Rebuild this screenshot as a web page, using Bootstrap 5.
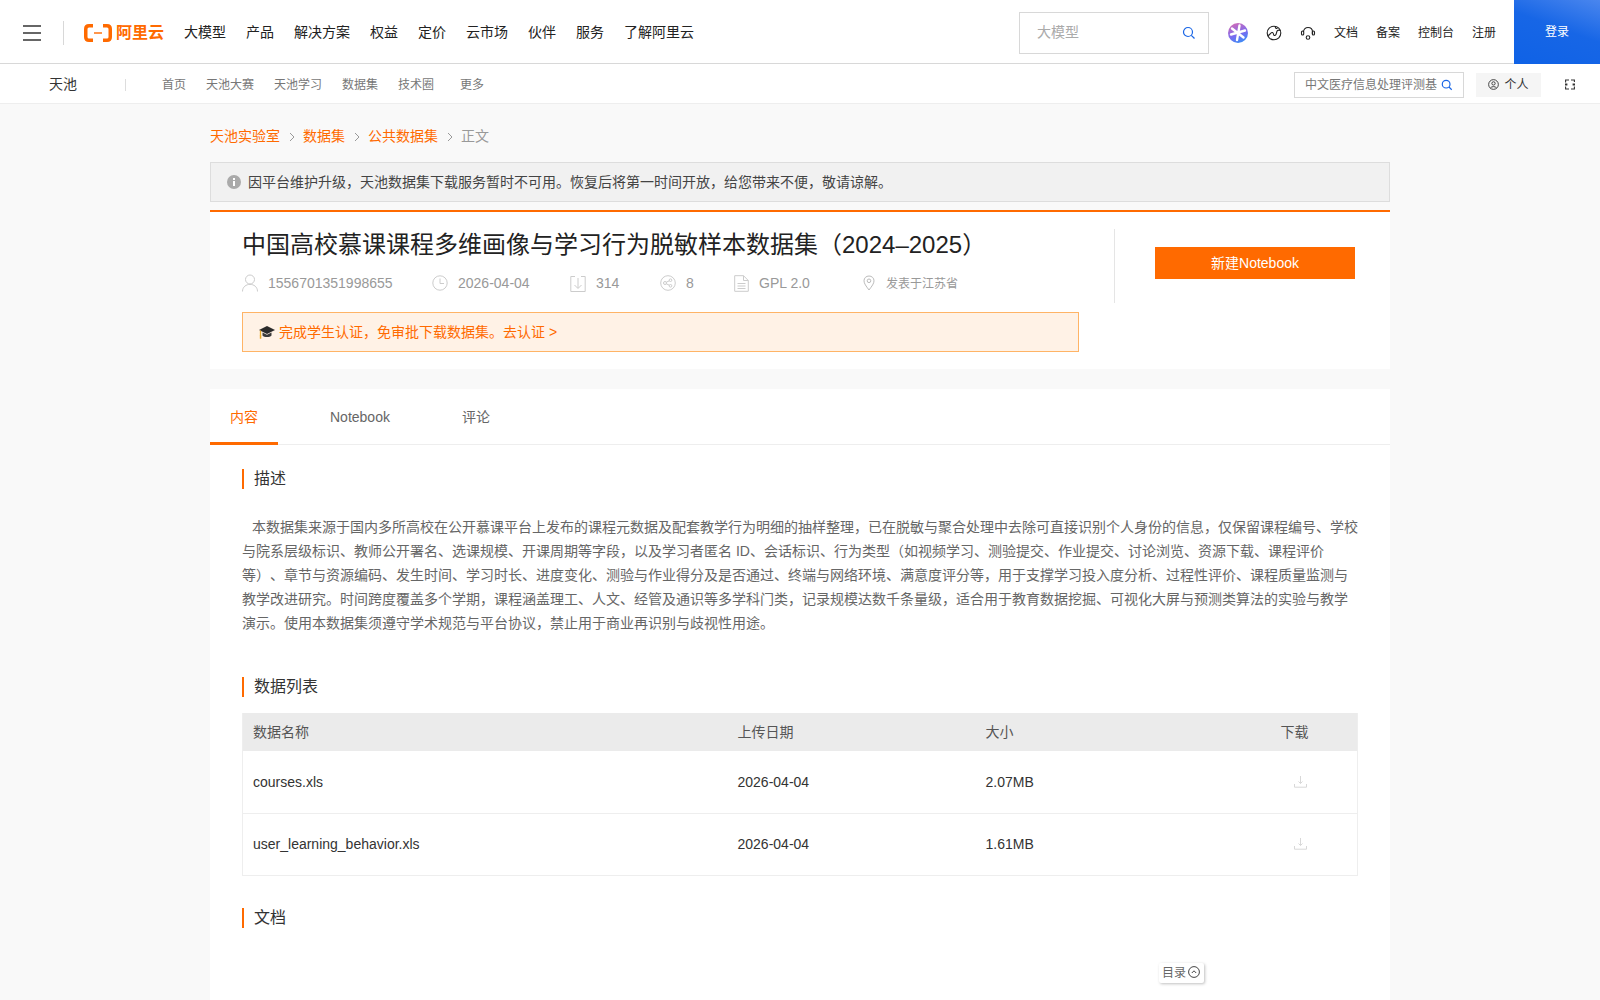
<!DOCTYPE html>
<html lang="zh-CN">
<head>
    <meta charset="UTF-8">
    <title>天池数据集</title>
    <link href="https://cdn.jsdelivr.net/npm/bootstrap@5.3.0/dist/css/bootstrap.min.css" rel="stylesheet">
    <style>
        body {
            background: #f9f9f9;
            font-family: "Liberation Sans", "Noto Sans CJK SC", sans-serif;
            font-size: 14px;
            color: #333;
            text-spacing-trim: space-all;
        }
        a { text-decoration: none; color: inherit; }

        /* top bar */
        .top-bar { height: 64px; background: #fff; border-bottom: 1px solid #d8d8d8; padding-top: 2px; }
        .menu-btn { width: 18px; margin-left: 23px; }
        .menu-btn span { display: block; height: 2px; background: #666; margin-bottom: 5px; }
        .menu-btn span:last-child { margin-bottom: 0; }
        .top-sep { width: 1px; height: 24px; background: #d8d8d8; margin: 0 20px 0 22px; }
        .logo-text { color: #ff6a00; font-size: 16px; font-weight: 700; line-height: 1; margin-left: 4px; }
        .top-nav { gap: 20px; margin-left: 20px; color: #222; }
        .top-search { width: 190px; height: 42px; border: 1px solid #d8d8d8; padding: 0 12px 0 17px; color: #aaa; }
        .top-right { gap: 18px; font-size: 12px; color: #222; margin: 0 18px 0 15px; }
        .login-btn { width: 86px; height: 64px; margin-top: -2px; color: #fff; font-size: 12px; background: linear-gradient(200deg, #4a86ee 0%, #1766e6 45%, #0f62e6 100%); }

        /* second bar */
        .sub-bar { height: 40px; background: #fff; border-bottom: 1px solid #eee; padding-top: 2px; }
        .sub-title { margin-left: 49px; color: #333; width: 76px; }
        .sub-sep { width: 1px; height: 12px; background: #ddd; margin-right: 36px; }
        .sub-nav { gap: 20px; font-size: 12px; color: #777; }
        .sub-more { margin-left: 6px; }
        .sub-search { width: 170px; height: 26px; border: 1px solid #d8d8d8; padding: 0 10px; font-size: 12px; color: #777; }
        .personal-btn { width: 65px; height: 24px; background: #f5f5f5; font-size: 12px; color: #333; margin-left: 12px; margin-right: 24px; gap: 5px; }
        .switch-icon { margin-right: 25px; }

        /* page */
        .page-wrap { width: 1180px; margin: 0 auto; }
        .crumbs { height: 58px; margin: 0; padding-top: 6px; font-size: 14px; color: #999; }
        .crumbs a { color: #ff6a00; }
        .crumbs .breadcrumb-item + .breadcrumb-item { padding-left: 9px; }
        .crumbs .breadcrumb-item + .breadcrumb-item::before { content: none; }
        .crumb-arrow { margin-right: 8px; }
        .site-notice { height: 40px; margin: 0; padding: 0 16px; background: #f1f1f1; border: 1px solid #ddd; border-radius: 0; color: #444; gap: 7px; }

        .head-panel { margin-top: 8px; height: 159px; background: #fff; border-top: 2px solid #ff6a00; padding: 0 32px; }
        .head-left { width: 871px; }
        .ds-title { font-size: 24px; font-weight: 400; color: #222; margin: 17px 0 0; line-height: 32px; }
        .meta-row { margin-top: 10px; height: 24px; color: #999; }
        .meta-item { gap: 10px; }
        .meta-item.w-user { width: 190px; }
        .meta-item.w-date { width: 138px; }
        .meta-item.w-dl { width: 90px; }
        .meta-item.w-share { width: 74px; }
        .meta-item.w-lic { width: 129px; }
        .meta-small { font-size: 12px; margin-left: 1px; padding-top: 2px; }
        .student-tip { width: 837px; height: 40px; margin-top: 17px; padding: 0 16px; background: #fff2e6; border: 1px solid #ffb466; color: #ff6a00; gap: 4px; }
        .head-right { margin-top: 17px; margin-left: 1px; width: 241px; height: 74px; border-left: 1px solid #e5e5e5; padding: 18px 0 0 40px; }
        .new-btn { width: 200px; height: 32px; padding: 0; background: #ff6a00; border: 0; border-radius: 0; color: #fff; font-size: 14px; }
        .new-btn:hover { background: #ff6a00; color: #fff; }

        .body-panel { margin-top: 20px; background: #fff; min-height: 700px; position: relative; }
        .tab-row { height: 56px; border-bottom: 1px solid #eee; gap: 32px; }
        .tab-row .tab-link { display: block; height: 56px; line-height: 56px; padding: 0 20px; color: #666; }
        .tab-row .tab-link.on { color: #ff6a00; border-bottom: 3px solid #ff6a00; }
        .section-box { padding: 24px 32px 0; }
        .section-head { border-left: 2px solid #ff6a00; padding-left: 10px; font-size: 16px; line-height: 20px; font-weight: 400; color: #333; margin: 0; }
        .desc-text { margin: 26px 0 0; line-height: 24px; color: #666; text-indent: 10px; height: 120px; }
        .second-head { margin-top: 42px; }
        .data-table { margin: 16px 0 0; table-layout: fixed; width: 1116px; border: 1px solid #eee; border-top: 0; }
        .data-table th { height: 38px; padding: 0 10px; background: #ebebeb; font-weight: 400; color: #555; border: 0; vertical-align: middle; }
        .data-table td { height: 62px; padding: 0 10px; color: #333; border-bottom: 1px solid #eee; vertical-align: middle; }
        .data-table tr:first-child td:not(.dl-cell) { padding-top: 2px; }
        .data-table tr:last-child td { border-bottom: 0; }
        .dl-cell { padding-left: 23px !important; }
        .dl-head { padding-left: 10px !important; }
        .doc-head { margin-top: 32px; }
        .toc-float { position: absolute; left: 949px; top: 574px; width: 45px; height: 20px; background: #fff; box-shadow: 1px 1px 3px rgba(0,0,0,.25); border-radius: 2px; font-size: 12px; color: #666; padding-left: 3px; gap: 2px; }
        .toc-float svg { margin-bottom: 2px; }
    </style>
</head>
<body>
    <!-- main header -->
    <div class="top-bar d-flex align-items-center">
        <div class="menu-btn"><span></span><span></span><span></span></div>
        <div class="top-sep"></div>
        <a href="#" class="d-flex align-items-center">
            <svg width="28" height="18" viewBox="0 0 28 18"><path d="M9 1.750H5C3 1.750 1.750 3 1.750 5V13C1.750 15 3 16.250 5 16.250H9M19 1.750H23C25 1.750 26.250 3 26.250 5V13C26.250 15 25 16.250 23 16.250H19" fill="none" stroke="#ff6a00" stroke-width="3.500"/><rect x="10" y="8.300" width="8" height="1.400" fill="#ff6a00"/></svg>
            <span class="logo-text">阿里云</span>
        </a>
        <div class="top-nav d-flex">
            <a href="#">大模型</a><a href="#">产品</a><a href="#">解决方案</a><a href="#">权益</a><a href="#">定价</a><a href="#">云市场</a><a href="#">伙伴</a><a href="#">服务</a><a href="#">了解阿里云</a>
        </div>
        <div class="top-search d-flex align-items-center justify-content-between ms-auto">
            <span>大模型</span>
            <svg width="14" height="14" viewBox="0 0 14 14" fill="none" stroke="#1a66e6" stroke-width="1.200"><circle cx="6" cy="6" r="4.500"/><path d="M9.300 9.300L12.500 12.500"/></svg>
        </div>
        <div class="top-right d-flex align-items-center">
            <svg width="20" height="20" viewBox="0 0 20 20" class="ms-1"><defs><linearGradient id="qwen" x1="0.200" y1="0" x2="0.600" y2="1"><stop offset="0" stop-color="#d66bb4"/><stop offset="0.600" stop-color="#7a6cf0"/><stop offset="1" stop-color="#3d8bf5"/></linearGradient></defs><circle cx="10" cy="10" r="10" fill="url(#qwen)"/><path d="M11.500 2.500L9 17M4 5.500L15.500 14.500M3 11.500L17 7.500" stroke="#fff" stroke-width="2.400" stroke-linecap="round"/></svg>
            <svg width="16" height="16" viewBox="0 0 16 16" fill="none" stroke="#222" stroke-width="1.100"><circle cx="8" cy="8" r="6.800"/><path d="M1.800 10.500C4 10.500 4.500 7 6.500 7.500C8 8 7 11 9 10.500C11 10 10 6.500 11.500 5.500C12.500 5 13.500 5 14.500 5.500M9.500 1.500C9 3 10 3.800 11.500 3.500"/></svg>
            <svg width="16" height="16" viewBox="0 0 16 16" fill="none" stroke="#222" stroke-width="1.100"><path d="M3.500 7C3.500 1 12.500 1 12.500 7V9"/><rect x="1.500" y="6" width="2.200" height="4" rx="1"/><rect x="12.300" y="6" width="2.200" height="4" rx="1"/><circle cx="8" cy="12.500" r="1.800"/></svg>
            <a href="#">文档</a><a href="#">备案</a><a href="#">控制台</a><a href="#">注册</a>
        </div>
        <a href="#" class="login-btn d-flex align-items-center justify-content-center">登录</a>
    </div>

    <!-- tianchi sub nav -->
    <div class="sub-bar d-flex align-items-center">
        <div class="sub-title">天池</div>
        <div class="sub-sep"></div>
        <div class="sub-nav d-flex">
            <a href="#">首页</a><a href="#">天池大赛</a><a href="#">天池学习</a><a href="#">数据集</a><a href="#">技术圈</a><a href="#" class="sub-more">更多</a>
        </div>
        <div class="sub-search d-flex align-items-center justify-content-between ms-auto">
            <span class="text-nowrap overflow-hidden">中文医疗信息处理评测基</span>
            <svg width="12" height="12" viewBox="0 0 14 14" fill="none" stroke="#1a66e6" stroke-width="1.400" class="flex-shrink-0 ms-1"><circle cx="6" cy="6" r="4.500"/><path d="M9.300 9.300L12.500 12.500"/></svg>
        </div>
        <div class="personal-btn d-flex align-items-center justify-content-center">
            <svg width="11" height="11" viewBox="0 0 12 12" fill="none" stroke="#333" stroke-width="1"><circle cx="6" cy="6" r="5.300"/><circle cx="6" cy="4.800" r="1.800"/><path d="M2.800 9.800C3.800 7.800 8.200 7.800 9.200 9.800"/></svg>
            <span>个人</span>
        </div>
        <svg class="switch-icon" width="10" height="11" viewBox="0 0 10 11" fill="none" stroke="#333" stroke-width="1.100"><path d="M4 1H.6V3.500M6 1H9.400V3M.6 7.500V10H4M6 10H9.400V7.500"/><rect x="0" y="4.500" width="2.400" height="2" fill="#333" stroke="none"/><rect x="7.600" y="4.500" width="2.400" height="2" fill="#333" stroke="none"/></svg>
    </div>

    <div class="page-wrap">
        <!-- breadcrumb -->
        <ol class="breadcrumb crumbs align-items-center">
            <li class="breadcrumb-item"><a href="#">天池实验室</a></li>
            <li class="breadcrumb-item"><svg class="crumb-arrow" width="6" height="10" viewBox="0 0 6 10" fill="none" stroke="#999"><path d="M1 1L5 5L1 9"/></svg><a href="#">数据集</a></li>
            <li class="breadcrumb-item"><svg class="crumb-arrow" width="6" height="10" viewBox="0 0 6 10" fill="none" stroke="#999"><path d="M1 1L5 5L1 9"/></svg><a href="#">公共数据集</a></li>
            <li class="breadcrumb-item"><svg class="crumb-arrow" width="6" height="10" viewBox="0 0 6 10" fill="none" stroke="#999"><path d="M1 1L5 5L1 9"/></svg>正文</li>
        </ol>

        <div class="alert site-notice d-flex align-items-center">
            <svg width="14" height="14" viewBox="0 0 14 14"><circle cx="7" cy="7" r="7" fill="#aaa"/><rect x="6" y="6" width="2" height="5" fill="#fff"/><rect x="6" y="3" width="2" height="2" fill="#fff"/></svg>
            <span>因平台维护升级，天池数据集下载服务暂时不可用。恢复后将第一时间开放，给您带来不便，敬请谅解。</span>
        </div>

        <!-- dataset header -->
        <div class="head-panel d-flex">
            <div class="head-left">
                <h1 class="ds-title text-nowrap">中国高校慕课课程多维画像与学习行为脱敏样本数据集（2024–2025）</h1>
                <div class="meta-row d-flex align-items-center">
                    <div class="meta-item w-user d-flex align-items-center">
                        <svg width="16" height="18" viewBox="0 0 16 18" fill="none" stroke="#ccc"><circle cx="8" cy="5.500" r="4.500"/><path d="M.5 17.500C.5 8 15.500 8 15.500 17.500"/></svg>
                        <span>1556701351998655</span>
                    </div>
                    <div class="meta-item w-date d-flex align-items-center">
                        <svg width="16" height="16" viewBox="0 0 16 16" fill="none" stroke="#ccc"><circle cx="8" cy="8" r="7.200"/><path d="M8 3.500V8.500H12"/></svg>
                        <span>2026-04-04</span>
                    </div>
                    <div class="meta-item w-dl d-flex align-items-center">
                        <svg width="16" height="17" viewBox="0 0 16 17" fill="none" stroke="#ccc"><path d="M5 1.500H.8V16.500H15.200V1.500H11M8 3V13M4.500 10L8 13.500L11.500 10"/></svg>
                        <span class="ms-0">314</span>
                    </div>
                    <div class="meta-item w-share d-flex align-items-center">
                        <svg width="16" height="16" viewBox="0 0 16 16" fill="none" stroke="#ccc"><circle cx="8" cy="8" r="7.300"/><circle cx="5" cy="8" r="1.500"/><circle cx="10.500" cy="5.200" r="1.300"/><circle cx="10.500" cy="10.800" r="1.300"/><path d="M6.300 7.200L9.300 5.800M6.300 8.800L9.300 10.200"/></svg>
                        <span>8</span>
                    </div>
                    <div class="meta-item w-lic d-flex align-items-center">
                        <svg width="15" height="17" viewBox="0 0 15 17" fill="none" stroke="#ccc"><path d="M.7.700H9.500L14.300 5.500V16.300H.7ZM9.500.7V5.500H14.300M3.500 8.500H11.500M3.500 11H11.500M3.500 13.500H11.500"/></svg>
                        <span>GPL 2.0</span>
                    </div>
                    <div class="meta-item d-flex align-items-center">
                        <svg width="12" height="16" viewBox="0 0 12 16" fill="none" stroke="#bbb"><path d="M6 15C3 11 1 8.500 1 5.800C1 3 3.200 1 6 1C8.800 1 11 3 11 5.800C11 8.500 9 11 6 15Z"/><circle cx="6" cy="5.800" r="1.800"/></svg>
                        <span class="meta-small">发表于江苏省</span>
                    </div>
                </div>
                <a href="#" class="student-tip d-flex align-items-center">
                    <svg width="16" height="14" viewBox="0 0 16 14"><path d="M8 1L16 5L8 9L0 5Z" fill="#2b2b2b"/><path d="M3.500 7.500V10.500C5 12.500 11 12.500 12.500 10.500V7.500L8 9.800Z" fill="#3a3a3a"/><path d="M1.500 5.500V11" stroke="#e8a723" stroke-width="1.300"/><rect x="0.800" y="10.500" width="1.500" height="3.200" fill="#e8a723"/></svg>
                    <span>完成学生认证，免审批下载数据集。去认证 &gt;</span>
                </a>
            </div>
            <div class="head-right">
                <button type="button" class="btn new-btn">新建Notebook</button>
            </div>
        </div>

        <!-- tabs and content -->
        <div class="body-panel">
            <div class="tab-row d-flex">
                <a href="#" class="tab-link on">内容</a>
                <a href="#" class="tab-link">Notebook</a>
                <a href="#" class="tab-link">评论</a>
            </div>
            <div class="section-box">
                <h5 class="section-head">描述</h5>
                <p class="desc-text">本数据集来源于国内多所高校在公开慕课平台上发布的课程元数据及配套教学行为明细的抽样整理，已在脱敏与聚合处理中去除可直接识别个人身份的信息，仅保留课程编号、学校与院系层级标识、教师公开署名、选课规模、开课周期等字段，以及学习者匿名 ID、会话标识、行为类型（如视频学习、测验提交、作业提交、讨论浏览、资源下载、课程评价等）、章节与资源编码、发生时间、学习时长、进度变化、测验与作业得分及是否通过、终端与网络环境、满意度评分等，用于支撑学习投入度分析、过程性评价、课程质量监测与教学改进研究。时间跨度覆盖多个学期，课程涵盖理工、人文、经管及通识等多学科门类，记录规模达数千条量级，适合用于教育数据挖掘、可视化大屏与预测类算法的实验与教学演示。使用本数据集须遵守学术规范与平台协议，禁止用于商业再识别与歧视性用途。</p>

                <h5 class="section-head second-head">数据列表</h5>
                <table class="table data-table">
                    <thead>
                        <tr>
                            <th style="width: 485px">数据名称</th>
                            <th style="width: 248px">上传日期</th>
                            <th style="width: 295px">大小</th>
                            <th class="dl-head">下载</th>
                        </tr>
                    </thead>
                    <tbody>
                        <tr>
                            <td>courses.xls</td>
                            <td>2026-04-04</td>
                            <td>2.07MB</td>
                            <td class="dl-cell"><svg class="d-block" width="13" height="12" viewBox="0 0 13 12" fill="none" stroke="#d8d8d8"><path d="M6.500 0V7.500M4.500 5.500L6.500 7.500L8.500 5.500M.5 8V11.200H12.500V8"/></svg></td>
                        </tr>
                        <tr>
                            <td>user_learning_behavior.xls</td>
                            <td>2026-04-04</td>
                            <td>1.61MB</td>
                            <td class="dl-cell"><svg class="d-block" width="13" height="12" viewBox="0 0 13 12" fill="none" stroke="#d8d8d8"><path d="M6.500 0V7.500M4.500 5.500L6.500 7.500L8.500 5.500M.5 8V11.200H12.500V8"/></svg></td>
                        </tr>
                    </tbody>
                </table>

                <h5 class="section-head doc-head">文档</h5>
            </div>
            <div class="toc-float d-flex align-items-center">
                <span>目录</span>
                <svg width="12" height="12" viewBox="0 0 12 12" fill="none" stroke="#444"><circle cx="6" cy="6" r="5.400"/><path d="M3.800 7L6 4.800L8.200 7"/></svg>
            </div>
        </div>
    </div>

    <script src="https://cdn.jsdelivr.net/npm/bootstrap@5.3.0/dist/js/bootstrap.bundle.min.js"></script>
</body>
</html>
